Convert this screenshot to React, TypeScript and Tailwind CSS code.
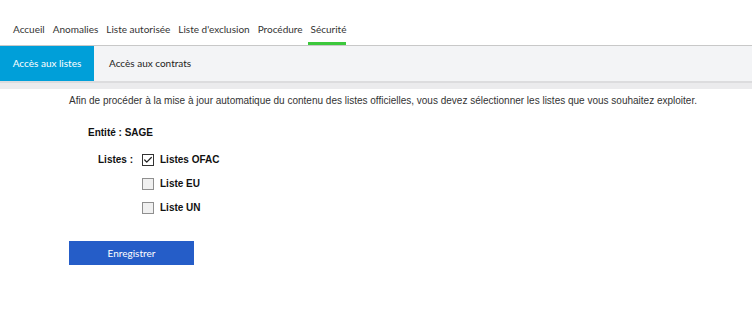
import { Check } from "lucide-react";

const NAV = ["Accueil", "Anomalies", "Liste autorisée", "Liste d'exclusion", "Procédure", "Sécurité"];

const LISTS = [
  { label: "Listes OFAC", checked: true },
  { label: "Liste EU", checked: false },
  { label: "Liste UN", checked: false },
];

function Box({ checked }: { checked: boolean }) {
  return checked ? (
    <span className="grid h-[12px] w-[12px] place-items-center border border-[#333] bg-white">
      <Check className="h-[10px] w-[10px] text-[#222]" strokeWidth={3} />
    </span>
  ) : (
    <span className="h-[12px] w-[12px] border border-[#8f8f8f] bg-[#f0f0f0]" />
  );
}

export default function App() {
  return (
    <div className="min-h-[325px] w-[752px] bg-white font-['Liberation_Sans',sans-serif]">
      {/* top navigation */}
      <nav className="flex items-end gap-[8px] border-b border-[#c8c8c8] px-[13px] pt-[22px] font-['Lato',sans-serif] text-[10px] text-[#333]">
        {NAV.map((item) => (
          <span
            key={item}
            className={
              item === "Sécurité"
                ? "-ml-[3px] border-b-[3px] border-[#3cc83c] pl-[3px] pb-[5px] leading-[15px]"
                : "border-b-[3px] border-transparent pb-[5px] leading-[15px]"
            }
          >
            {item}
          </span>
        ))}
      </nav>

      {/* sub tabs */}
      <div className="flex h-[37px] border-b-2 border-[#dcdcde] bg-[#f3f4f6] font-['Lato',sans-serif] text-[10px]">
        <div className="flex w-[94px] items-center justify-center bg-[#009fd9] text-white">Accès aux listes</div>
        <div className="flex items-center px-[15px] text-[#222]">Accès aux contrats</div>
      </div>
      <div className="h-[6px] bg-[#ebebed]" />

      <div className="pl-[69px] pr-[20px] pt-[4px] text-[10px] leading-[15px] text-[#333]">
        <p>
          Afin de procéder à la mise à jour automatique du contenu des listes officielles, vous devez sélectionner
          les listes que vous souhaitez exploiter.
        </p>

        <div className="mt-[17px] pl-[19px] font-bold text-[#111]">Entité : SAGE</div>

        <div className="mt-[12px] flex pl-[29px] font-bold text-[#111]">
          <span className="w-[44px]">Listes :</span>
          <div className="flex flex-col gap-[9px]">
            {LISTS.map((l) => (
              <label key={l.label} className="flex items-center gap-[6px]">
                <Box checked={l.checked} />
                {l.label}
              </label>
            ))}
          </div>
        </div>

        <button className="mt-[26px] h-[24px] w-[125px] bg-[#255dc8] font-['Lato',sans-serif] text-[10px] text-white">
          Enregistrer
        </button>
      </div>
    </div>
  );
}
